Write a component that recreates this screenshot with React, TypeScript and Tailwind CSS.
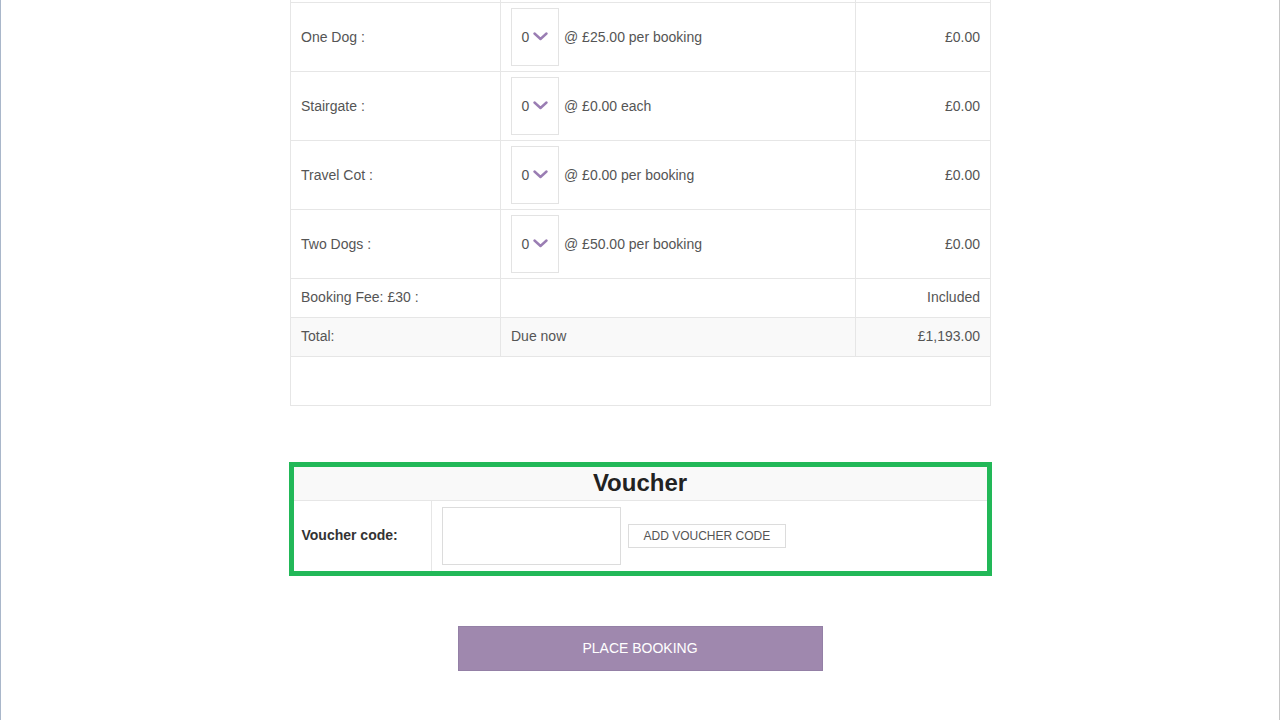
import React from 'react';

const extras = [
  { name: 'One Dog :', price: '@ £25.00 per booking' },
  { name: 'Stairgate :', price: '@ £0.00 each' },
  { name: 'Travel Cot :', price: '@ £0.00 per booking' },
  { name: 'Two Dogs :', price: '@ £50.00 per booking' },
];

function Chevron() {
  return (
    <svg width="15" height="9" viewBox="0 0 15 9" className="ml-[4px]">
      <path d="M1.5 1.5 L7.5 7 L13.5 1.5" fill="none" stroke="#9a7db3" strokeWidth="2.4" strokeLinecap="round" strokeLinejoin="round" />
    </svg>
  );
}

function QtySelect() {
  return (
    <div className="flex items-center justify-center w-[48px] h-[58px] border border-[#e3e3e3] bg-white text-[14px] text-[#555]">
      <span className="pt-[2px]">0</span>
      <Chevron />
    </div>
  );
}

export default function App() {
  const cell = 'border border-[#e6e6e6] px-[10px] text-[14px] text-[#555]';
  return (
    <div
      className="min-h-[720px] bg-white border-l border-l-[#a9b7ca] border-r border-r-[#c6c6c6]"
      style={{ fontFamily: '"Liberation Sans", Arial, sans-serif' }}
    >
      <div className="w-[700px] mx-auto">
        <table className="w-[700px] border-collapse table-fixed">
          <colgroup>
            <col className="w-[210px]" />
            <col className="w-[355px]" />
            <col className="w-[135px]" />
          </colgroup>
          <tbody>
            <tr>
              <td className="border-x border-[#e6e6e6] h-[2px] p-0" />
              <td className="border-x border-[#e6e6e6] h-[2px] p-0" />
              <td className="border-x border-[#e6e6e6] h-[2px] p-0" />
            </tr>
            {extras.map((e) => (
              <tr key={e.name}>
                <td className={`${cell} h-[69px] pt-[2px]`}>{e.name}</td>
                <td className={`${cell} h-[69px]`}>
                  <div className="flex items-center gap-[5px]">
                    <QtySelect />
                    <span className="pt-[2px]">{e.price}</span>
                  </div>
                </td>
                <td className={`${cell} h-[69px] pt-[2px] text-right`}>£0.00</td>
              </tr>
            ))}
            <tr>
              <td className={`${cell} h-[39px]`}>Booking Fee: £30 :</td>
              <td className={`${cell} h-[39px]`} />
              <td className={`${cell} h-[39px] text-right`}>Included</td>
            </tr>
            <tr className="bg-[#f9f9f9]">
              <td className={`${cell} h-[39px]`}>Total:</td>
              <td className={`${cell} h-[39px]`}>Due now</td>
              <td className={`${cell} h-[39px] text-right`}>£1,193.00</td>
            </tr>
            <tr>
              <td colSpan={3} className="border border-[#e6e6e6] h-[49px]" />
            </tr>
          </tbody>
        </table>
      </div>

      <div className="w-[703px] mx-auto mt-[56px] border-[5px] border-[#22b858]">
        <div className="h-[34px] bg-[#f9f9f9] border-b border-[#e6e6e6] flex items-center justify-center">
          <h2 className="text-[24px] font-bold text-[#222]">Voucher</h2>
        </div>
        <div className="flex h-[70px]">
          <div className="w-[138px] border-r border-[#e6e6e6] flex items-center pl-[8px] text-[14px] font-bold text-[#333]">
            Voucher code:
          </div>
          <div className="flex items-center pl-[10px] gap-[7px]">
            <div className="w-[179px] h-[58px] border border-[#dcdcdc] bg-white" />
            <button className="h-[24px] px-[15px] border border-[#dcdcdc] bg-white text-[12px] text-[#555] uppercase">
              Add Voucher Code
            </button>
          </div>
        </div>
      </div>

      <div className="flex justify-center mt-[50px]">
        <button className="w-[365px] h-[45px] bg-[#9f88ae] border border-[#9480a6] text-white text-[14px]">
          PLACE BOOKING
        </button>
      </div>
    </div>
  );
}
